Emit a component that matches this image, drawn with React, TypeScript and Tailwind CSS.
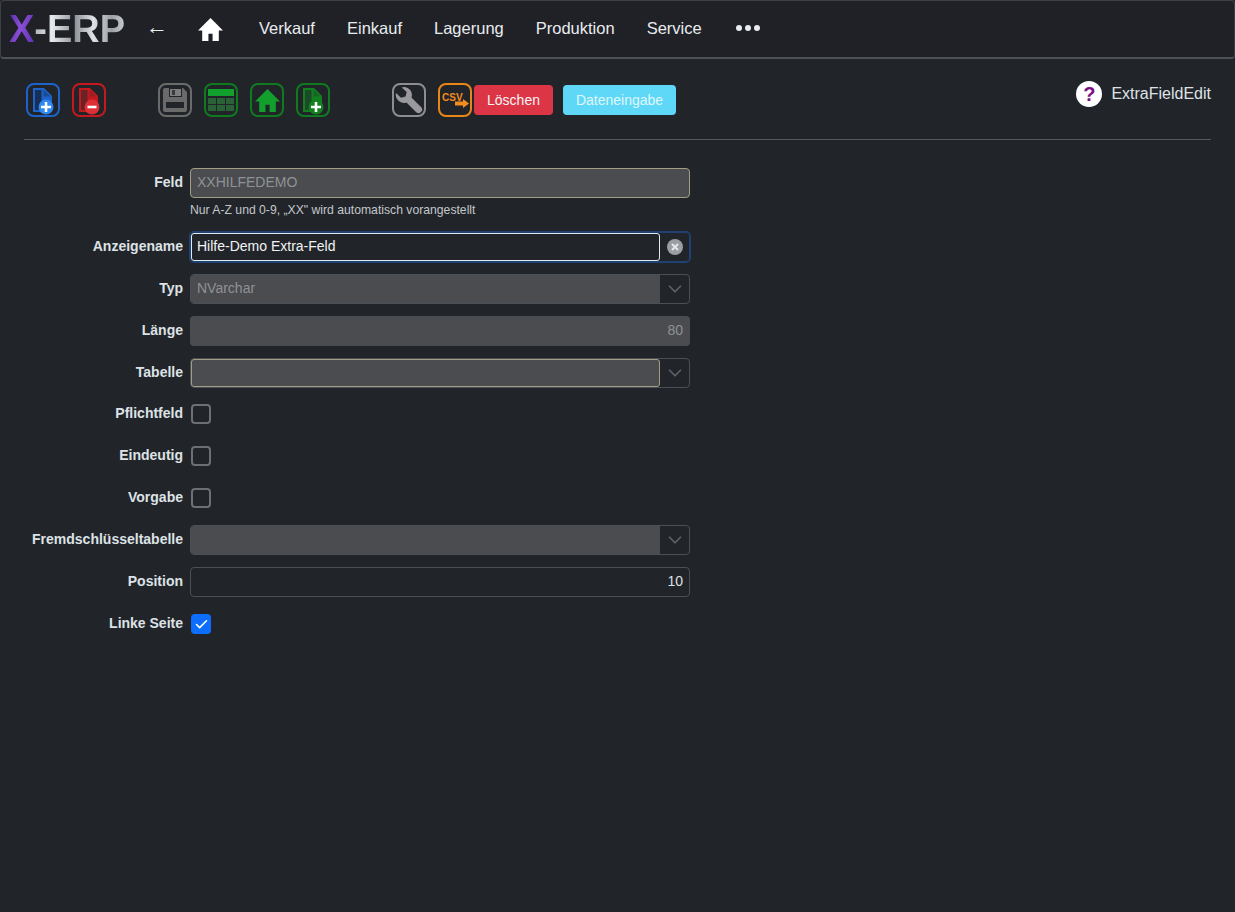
import { ReactNode } from "react";
import { Check, ChevronDown } from "lucide-react";

const FONT = "font-['Liberation_Sans',Arial,sans-serif]";

function IconBox({ color, children }: { color: string; children: ReactNode }) {
  return (
    <div className={`w-[34px] h-[34px] shrink-0 rounded-[8px] border-2 flex items-center justify-center ${color}`}>
      {children}
    </div>
  );
}

// document with a round badge in the lower right corner
function DocIcon({ fill, back, badge, plus }: { fill: string; back: string; badge: string; plus: boolean }) {
  return (
    <svg width="30" height="30" viewBox="0 0 30 30">
      <path d="M5 3h11l8 8v16H5z" fill={fill} />
      <path d="M7 5h6.500v20H7z" fill={back} />
      <path d="M15.500 4.500l7 7h-7z" fill={back} opacity="0.45" />
      <circle cx="18" cy="22" r="7.500" fill={badge} />
      <path d={plus ? "M18 17v10M13 22h10" : "M13.500 22h9"} stroke="#fff" strokeWidth="2.600" />
    </svg>
  );
}

function SaveIcon() {
  return (
    <svg width="30" height="30" viewBox="0 0 30 30">
      <path fill="#6a6a6a" d="M3 5a2 2 0 0 1 2-2h18l4 4v18a2 2 0 0 1-2 2H5a2 2 0 0 1-2-2z" />
      <rect x="9" y="3" width="13" height="9" fill="#212529" />
      <rect x="10" y="4" width="11" height="7" fill="#7d7d7d" />
      <rect x="12" y="5" width="3" height="5" fill="#3a3a3c" />
      <rect x="6" y="17" width="18" height="6" fill="#212529" />
    </svg>
  );
}

function TableIcon() {
  return (
    <svg width="30" height="30" viewBox="0 0 30 30">
      <rect x="2" y="4" width="26" height="7" fill="#12a02c" />
      {[13, 20].map(y =>
        [2, 11, 20].map(x => <rect key={`${x}-${y}`} x={x} y={y} width="8" height="6" fill="#2a6238" />)
      )}
    </svg>
  );
}

function HomeIcon({ fill, size }: { fill: string; size: number }) {
  return (
    <svg width={size} height={size} viewBox="0 0 26 26">
      <path fill={fill} d="M13 2L1 14h4v10h6v-7h4v7h6V14h4z" />
    </svg>
  );
}

function WrenchIcon() {
  return (
    <svg width="28" height="28" viewBox="0 0 28 28" className="-scale-x-100">
      <path
        fill="#9a9a9e"
        d="M19 1a8 8 0 0 0-7.500 10.500L2 21a3.500 3.500 0 0 0 5 5l9.500-9.600A8 8 0 0 0 27 7l-5 4.800-4.500-1.200-1.200-4.500 5-4.700A8 8 0 0 0 19 1z"
      />
    </svg>
  );
}

function CsvIcon() {
  return (
    <div className="relative w-[30px] h-[30px]">
      <span className="absolute left-[2px] top-[6px] text-[10px] leading-[14px] font-bold text-[#f28c1e]">CSV</span>
      <svg className="absolute left-[15px] top-[14px]" width="14" height="9" viewBox="0 0 14 9">
        <path fill="#f28c1e" d="M0 2.500h8V0l6 4.500-6 4.500V6.500H0z" />
      </svg>
    </div>
  );
}

function Label({ children }: { children: ReactNode }) {
  return <label className="-mt-[2px] w-[159px] shrink-0 text-right text-[14px] leading-[20px] font-bold text-[#dee2e6]">{children}</label>;
}

function Row({ label, tight, children }: { label: string; tight?: boolean; children: ReactNode }) {
  return (
    <div className={`flex items-center gap-[7px] h-[30px] ${tight ? "mb-[11px]" : "mb-[12px]"}`}>
      <Label>{label}</Label>
      {children}
    </div>
  );
}

function ReadonlyInput({ text, right }: { text: string; right?: boolean }) {
  return (
    <div className={`w-[500px] h-[30px] rounded-[4px] bg-[#4a4c4f] px-[7px] text-[14px] leading-[29px] text-[#8f9295] ${right ? "text-right" : ""}`}>
      {text}
    </div>
  );
}

function SelectField({ text, highlight }: { text?: string; highlight?: boolean }) {
  return (
    <div className="w-[500px] h-[30px] flex rounded-[4px] border border-[#495057]">
      <div
        className={`flex-1 rounded-l-[3px] bg-[#4a4c4f] px-[6px] text-[14px] leading-[27px] text-[#8f9295] ${
          highlight ? "border border-[#a39e83] rounded-r-[3px]" : ""
        }`}
      >
        {text}
      </div>
      <div className="w-[29px] shrink-0 flex items-center justify-center">
        <ChevronDown size={22} strokeWidth={1.8} color="#5d646b" />
      </div>
    </div>
  );
}

function CheckBox({ checked }: { checked?: boolean }) {
  return checked ? (
    <div className="ml-px w-[20px] h-[20px] rounded-[4px] bg-[#0d6efd] flex items-center justify-center">
      <Check size={15} strokeWidth={2.5} color="#fff" />
    </div>
  ) : (
    <div className="ml-px w-[20px] h-[20px] rounded-[4px] border-2 border-[#6c7075]" />
  );
}

export default function App() {
  const menu = ["Verkauf", "Einkauf", "Lagerung", "Produktion", "Service"];

  return (
    <div className={`${FONT} w-[1235px] h-[912px] overflow-hidden bg-[#212529] text-[#dee2e6]`}>
      {/* Navbar */}
      <nav className="h-[59px] flex items-center rounded-[4px] border border-t-[#3c4045] border-x-[#3c4045] border-b-2 border-b-[#4d5157] bg-[#1f2127]">
        <div className="ml-[8px] w-[120px] text-[38px] leading-[40px] font-bold whitespace-nowrap">
          <span className="bg-[linear-gradient(100deg,#4f2a9e,#8a4fd8_45%,#5a2fae)] bg-clip-text text-transparent">X</span>
          <span className="bg-[linear-gradient(90deg,#a9b0b6,#e6eaee_20%,#8d9399_45%,#dfe3e6_65%,#9aa0a5_85%,#c9ced2)] bg-clip-text text-transparent">-ERP</span>
        </div>
        <span className="ml-[17px] -mt-[4px] w-[51px] text-[22px] leading-none text-[#e9ecef]">←</span>
        <HomeIcon fill="#fff" size={27} />
        <div className="ml-[35px] mb-[2px] flex items-center gap-[32px] text-[16.5px] text-[#e9ecef]">
          {menu.map(item => (
            <span key={item}>{item}</span>
          ))}
          <span className="flex gap-[3px] ml-[2px]">
            <i className="w-[6px] h-[6px] rounded-full bg-[#e9ecef]" />
            <i className="w-[6px] h-[6px] rounded-full bg-[#e9ecef]" />
            <i className="w-[6px] h-[6px] rounded-full bg-[#e9ecef]" />
          </span>
        </div>
      </nav>

      {/* Toolbar */}
      <div className="mx-[24px] h-[81px] border-b border-[#55595e] flex pt-[24px] pl-[2px]">
        <div className="flex items-start gap-[12px]">
          <IconBox color="border-[#1d63c9]">
            <DocIcon fill="#1d63c9" back="#17305a" badge="#2f87f2" plus />
          </IconBox>
          <IconBox color="border-[#c4191f]">
            <DocIcon fill="#c4191f" back="#6a2226" badge="#dc2f36" plus={false} />
          </IconBox>
          <div className="w-[28px]" />
          <IconBox color="border-[#6b6b6b]">
            <SaveIcon />
          </IconBox>
          <IconBox color="border-[#0f7a20]">
            <TableIcon />
          </IconBox>
          <IconBox color="border-[#0f7a20]">
            <HomeIcon fill="#12a02c" size={27} />
          </IconBox>
          <IconBox color="border-[#0f7a20]">
            <DocIcon fill="#12801f" back="#1b4a28" badge="#12801f" plus />
          </IconBox>
          <div className="w-[38px]" />
          <IconBox color="border-[#8d8d92]">
            <WrenchIcon />
          </IconBox>
          <IconBox color="border-[#e9861a]">
            <CsvIcon />
          </IconBox>
        </div>
        <button className="ml-[2px] mt-[2px] w-[79px] h-[30px] rounded-[4px] bg-[#dc3545] text-[14px] text-[#f5f5f5]">Löschen</button>
        <button className="ml-[10px] mt-[2px] w-[113px] h-[30px] rounded-[4px] bg-[#5fd8f7] text-[14px] text-[#dff7fd]">Dateneingabe</button>
        <div className="ml-auto flex items-start gap-[9px]">
          <div className="-mt-[2px] w-[26px] h-[26px] rounded-full bg-white text-center text-[20px] leading-[26px] font-bold text-[#7a1083]">?</div>
          <span className="-mt-[1px] text-[16px] leading-[24px] text-[#dee2e6]">ExtraFieldEdit</span>
        </div>
      </div>

      {/* Form */}
      <form className="pt-[28px] pl-[24px]">
        <div className="flex items-center gap-[7px] h-[30px]">
          <Label>Feld</Label>
          <div className="w-[500px] h-[30px] rounded-[4px] border border-[#a39e83] bg-[#4a4c4f] px-[6px] text-[14px] leading-[26px] text-[#8f9295]">XXHILFEDEMO</div>
        </div>
        <div className="h-[34px] pl-[166px] pt-[4px] text-[12.2px] leading-[16px] text-[#c3c7cb]">Nur A-Z und 0-9, „XX" wird automatisch vorangestellt</div>

        <Row label="Anzeigename">
          <div className="w-[500px] h-[30px] flex rounded-[4px] border border-[#1f4173] shadow-[0_0_0_1px_#1f4173]">
            <div className="flex-1 rounded-[3px] border border-[#dfeaf2] bg-[#212529] px-[5px] text-[14px] leading-[25px] text-[#f1f3f5]">Hilfe-Demo Extra-Feld</div>
            <div className="w-[29px] shrink-0 flex items-center justify-center">
              <svg width="16" height="16" viewBox="0 0 16 16">
                <circle cx="8" cy="8" r="8" fill="#9b9ea3" />
                <path d="M5 5l6 6M11 5l-6 6" stroke="#e6e7e9" strokeWidth="2" />
              </svg>
            </div>
          </div>
        </Row>
        <Row label="Typ">
          <SelectField text="NVarchar" />
        </Row>
        <Row label="Länge">
          <ReadonlyInput text="80" right />
        </Row>
        <Row label="Tabelle" tight>
          <SelectField highlight />
        </Row>
        <Row label="Pflichtfeld">
          <CheckBox />
        </Row>
        <Row label="Eindeutig">
          <CheckBox />
        </Row>
        <Row label="Vorgabe">
          <CheckBox />
        </Row>
        <Row label="Fremdschlüsseltabelle">
          <SelectField />
        </Row>
        <Row label="Position">
          <div className="w-[500px] h-[30px] rounded-[4px] border border-[#495057] px-[6px] text-right text-[14px] leading-[27px] text-[#dee2e6]">10</div>
        </Row>
        <Row label="Linke Seite">
          <CheckBox checked />
        </Row>
      </form>
    </div>
  );
}
